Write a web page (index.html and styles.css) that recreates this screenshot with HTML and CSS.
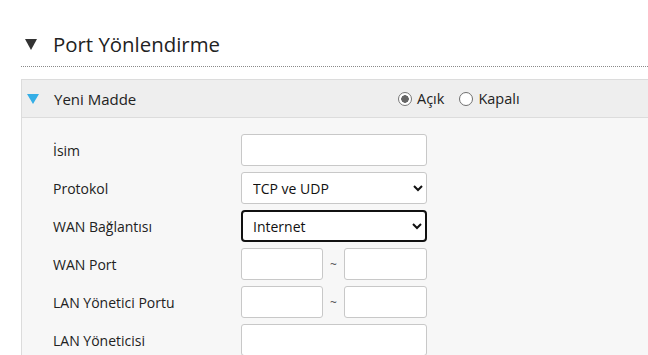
FILE: index.html
```html
<!DOCTYPE html>
<html>
<head>
    <title>Port Yönlendirme</title>
    <link rel="stylesheet" href="styles.css">
</head>
<body>
    <div class="page">
        <h2 class="section-title">
            <span class="caret caret-dark"></span>
            Port Yönlendirme
        </h2>

        <div class="panel">
            <div class="panel-header">
                <span class="caret caret-blue"></span>
                <span class="panel-title">Yeni Madde</span>
                <div class="radio-group">
                    <label class="radio"><span class="radio-dot checked"></span>Açık</label>
                    <label class="radio"><span class="radio-dot"></span>Kapalı</label>
                </div>
            </div>

            <div class="panel-body">
                <div class="form-row">
                    <label>İsim</label>
                    <input type="text" class="field">
                </div>
                <div class="form-row">
                    <label>Protokol</label>
                    <select class="field">
                        <option>TCP ve UDP</option>
                        <option>TCP</option>
                        <option>UDP</option>
                    </select>
                </div>
                <div class="form-row">
                    <label>WAN Bağlantısı</label>
                    <select class="field focused">
                        <option>Internet</option>
                    </select>
                </div>
                <div class="form-row">
                    <label>WAN Port</label>
                    <div class="range">
                        <input type="text" class="field small">
                        <span class="tilde">~</span>
                        <input type="text" class="field small">
                    </div>
                </div>
                <div class="form-row">
                    <label>LAN Yönetici Portu</label>
                    <div class="range">
                        <input type="text" class="field small">
                        <span class="tilde">~</span>
                        <input type="text" class="field small">
                    </div>
                </div>
                <div class="form-row">
                    <label>LAN Yöneticisi</label>
                    <input type="text" class="field">
                </div>
            </div>
        </div>
    </div>
</body>
</html>
```

FILE: styles.css
```css
:root {
    --text: #222;
    --border: #dcdcdc;
    --field-border: #c8c8c8;
    --header-bg: #eeeeee;
    --body-bg: #f7f7f7;
    --blue: #35aee6;
}

* {
    margin: 0;
    padding: 0;
    box-sizing: border-box;
}

body {
    font-family: 'Open Sans', sans-serif;
    color: var(--text);
    background: #fff;
    overflow: hidden;
}

.page {
    padding: 28px 0 0 21px;
}

.section-title {
    display: flex;
    align-items: center;
    height: 39px;
    padding-left: 4px;
    padding-bottom: 6px;
    font-size: 20.4px;
    font-weight: 400;
    color: #222;
    border-bottom: 1px dotted #8a8a8a;
}

.caret {
    display: inline-block;
    width: 0;
    height: 0;
    border-left: 6px solid transparent;
    border-right: 6px solid transparent;
}

.caret-dark {
    border-top: 11px solid #333;
    margin-right: 16px;
}

.caret-blue {
    border-top: 10px solid var(--blue);
    margin-right: 15px;
}

.panel {
    margin-top: 12px;
    border: 1px solid var(--border);
    border-right: none;
    background: var(--body-bg);
}

.panel-header {
    display: flex;
    align-items: center;
    height: 38px;
    padding-left: 5px;
    background: var(--header-bg);
    border-bottom: 1px solid var(--border);
    font-size: 15px;
}

.panel-title {
    width: 344px;
}

.radio-group {
    display: flex;
    gap: 15px;
    font-size: 14.5px;
}

.radio {
    display: flex;
    align-items: center;
    gap: 5px;
}

.radio-dot {
    display: inline-block;
    width: 14px;
    height: 14px;
    border: 1px solid #6f6f6f;
    border-radius: 50%;
    background: #fff;
}

.radio-dot.checked {
    border-color: #777;
    background: radial-gradient(circle, #666 0, #666 3.5px, #fff 4px);
}

.panel-body {
    padding: 16px 0 10px 31px;
    display: flex;
    flex-direction: column;
    gap: 6px;
}

.form-row {
    display: grid;
    grid-template-columns: 188px 186px;
    align-items: center;
    font-size: 14px;
}

.field {
    width: 186px;
    height: 32px;
    border: 1px solid var(--field-border);
    border-radius: 3px;
    background: #fff;
    font-family: 'Open Sans', sans-serif;
    font-size: 14px;
    color: #111;
    padding: 0 7px;
}

.field.focused {
    border: 2px solid #111;
    border-radius: 4px;
    padding: 0 6px;
}

.range {
    display: flex;
    align-items: center;
    width: 186px;
}

.field.small {
    width: 82px;
}

.tilde {
    width: 21px;
    text-align: center;
    font-size: 12px;
    color: #555;
}

.range .field.small:last-child {
    width: 83px;
}
```
